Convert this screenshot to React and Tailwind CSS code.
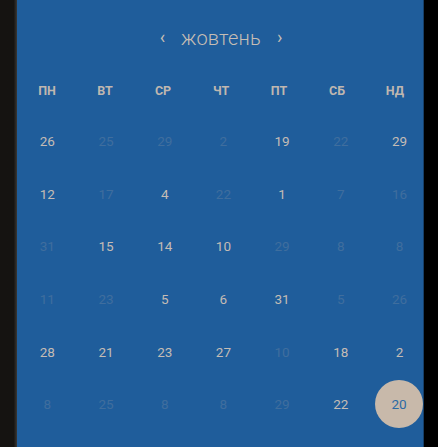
import React from "react";

const WEEKDAYS = ["пн", "вт", "ср", "чт", "пт", "сб", "нд"];

// [day, bright]
const ROWS = [
    [[26, 1], [25, 0], [29, 0], [2, 0], [19, 1], [22, 0], [29, 1]],
    [[12, 1], [17, 0], [4, 1], [22, 0], [1, 1], [7, 0], [16, 0]],
    [[31, 0], [15, 1], [14, 1], [10, 1], [29, 0], [8, 0], [8, 0]],
    [[11, 0], [23, 0], [5, 1], [6, 1], [31, 1], [5, 0], [26, 0]],
    [[28, 1], [21, 1], [23, 1], [27, 1], [10, 0], [18, 1], [2, 1]],
    [[8, 0], [25, 0], [8, 0], [8, 0], [29, 0], [22, 1], [20, 2]],
];

export default function App() {
    return (
        <div className="flex h-[447px] w-[438px] bg-black overflow-hidden" style={{ fontFamily: "Roboto, 'Noto Sans', sans-serif" }}>
            {/* left rail */}
            <div className="w-[17px] shrink-0 bg-gradient-to-r from-[#151311] from-80% to-[#3a3835]" />

            {/* calendar panel */}
            <div className="w-[407px] shrink-0 bg-[#1f5d9b] border-r border-[#163f68] overflow-hidden">
                <div className="h-[76px] flex items-center justify-center gap-[12px] text-[#c6bdb4]">
                    <button className="text-[18px] leading-none px-1 -mt-[2px] ml-[2px]">‹</button>
                    <span className="text-[20px] font-light tracking-[0.2px]">жовтень</span>
                    <button className="text-[18px] leading-none px-1 -mt-[2px]">›</button>
                </div>

                <div className="pl-[1px] grid grid-cols-[repeat(7,58px)] h-[30px] items-center">
                    {WEEKDAYS.map(d => (
                        <div key={d} className="text-center text-[12.5px] font-bold uppercase text-[#bfb7b0]">
                            {d}
                        </div>
                    ))}
                </div>

                <div className="mt-[9px] pl-[1px] grid grid-cols-[repeat(7,58.7px)] auto-rows-[52.6px]">
                    {ROWS.flat().map(([n, s], i) => (
                        <div key={i} className="flex items-center justify-center">
                            {s === 2 ? (
                                <span className="-ml-[1px] w-[48px] h-[48px] shrink-0 rounded-full bg-[#c8b9aa] flex items-center justify-center text-[13.5px] text-[#2c6aa5]">
                                    {n}
                                </span>
                            ) : (
                                <span className={`text-[13.5px] ${s ? "text-[#c4bcb5]" : "text-[#3f6e9e]"}`}>
                                    {n}
                                </span>
                            )}
                        </div>
                    ))}
                </div>
            </div>
        </div>
    );
}
